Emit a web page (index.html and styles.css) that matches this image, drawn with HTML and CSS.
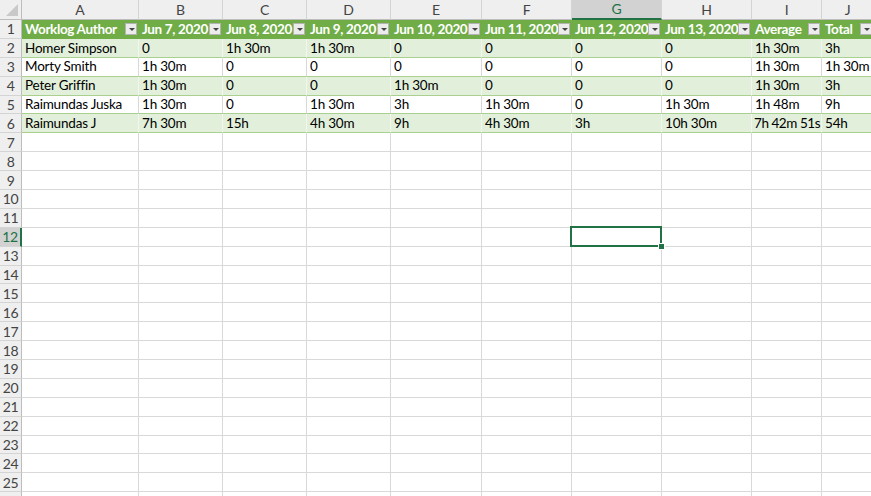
FILE: index.html
```html
<!DOCTYPE html>
<html>
<head>
<meta charset="utf-8">
<link rel="stylesheet" href="styles.css">
</head>
<body>
<div class="sheet">
  <div class="row colhead">
    <span class="corner"></span>
    <span>A</span><span>B</span><span>C</span><span>D</span><span>E</span><span>F</span><span class="sel">G</span><span>H</span><span>I</span><span>J</span>
  </div>
  <div class="row thead">
    <span class="rh">1</span>
    <span class="th">Worklog Author<i class="flt"></i></span>
    <span class="th">Jun 7, 2020<i class="flt"></i></span>
    <span class="th">Jun 8, 2020<i class="flt"></i></span>
    <span class="th">Jun 9, 2020<i class="flt"></i></span>
    <span class="th">Jun 10, 2020<i class="flt"></i></span>
    <span class="th">Jun 11, 2020<i class="flt"></i></span>
    <span class="th">Jun 12, 2020<i class="flt"></i></span>
    <span class="th">Jun 13, 2020<i class="flt"></i></span>
    <span class="th">Average<i class="flt"></i></span>
    <span class="th">Total<i class="flt"></i></span>
  </div>
  <div class="row band">
    <span class="rh">2</span><span>Homer Simpson</span><span>0</span><span>1h 30m</span><span>1h 30m</span><span>0</span><span>0</span><span>0</span><span>0</span><span>1h 30m</span><span>3h</span>
  </div>
  <div class="row plain">
    <span class="rh">3</span><span>Morty Smith</span><span>1h 30m</span><span>0</span><span>0</span><span>0</span><span>0</span><span>0</span><span>0</span><span>1h 30m</span><span>1h 30m</span>
  </div>
  <div class="row band">
    <span class="rh">4</span><span>Peter Griffin</span><span>1h 30m</span><span>0</span><span>0</span><span>1h 30m</span><span>0</span><span>0</span><span>0</span><span>1h 30m</span><span>3h</span>
  </div>
  <div class="row plain">
    <span class="rh">5</span><span>Raimundas Juska</span><span>1h 30m</span><span>0</span><span>1h 30m</span><span>3h</span><span>1h 30m</span><span>0</span><span>1h 30m</span><span>1h 48m</span><span>9h</span>
  </div>
  <div class="row band">
    <span class="rh">6</span><span>Raimundas J</span><span>7h 30m</span><span>15h</span><span>4h 30m</span><span>9h</span><span>4h 30m</span><span>3h</span><span>10h 30m</span><span class="tight">7h 42m 51s</span><span>54h</span>
  </div>
  <div class="row"><span class="rh">7</span><span></span><span></span><span></span><span></span><span></span><span></span><span></span><span></span><span></span><span></span></div>
  <div class="row"><span class="rh">8</span><span></span><span></span><span></span><span></span><span></span><span></span><span></span><span></span><span></span><span></span></div>
  <div class="row"><span class="rh">9</span><span></span><span></span><span></span><span></span><span></span><span></span><span></span><span></span><span></span><span></span></div>
  <div class="row"><span class="rh">10</span><span></span><span></span><span></span><span></span><span></span><span></span><span></span><span></span><span></span><span></span></div>
  <div class="row"><span class="rh">11</span><span></span><span></span><span></span><span></span><span></span><span></span><span></span><span></span><span></span><span></span></div>
  <div class="row"><span class="rh sel">12</span><span></span><span></span><span></span><span></span><span></span><span></span><span class="active"></span><span></span><span></span><span></span></div>
  <div class="row"><span class="rh">13</span><span></span><span></span><span></span><span></span><span></span><span></span><span></span><span></span><span></span><span></span></div>
  <div class="row"><span class="rh">14</span><span></span><span></span><span></span><span></span><span></span><span></span><span></span><span></span><span></span><span></span></div>
  <div class="row"><span class="rh">15</span><span></span><span></span><span></span><span></span><span></span><span></span><span></span><span></span><span></span><span></span></div>
  <div class="row"><span class="rh">16</span><span></span><span></span><span></span><span></span><span></span><span></span><span></span><span></span><span></span><span></span></div>
  <div class="row"><span class="rh">17</span><span></span><span></span><span></span><span></span><span></span><span></span><span></span><span></span><span></span><span></span></div>
  <div class="row"><span class="rh">18</span><span></span><span></span><span></span><span></span><span></span><span></span><span></span><span></span><span></span><span></span></div>
  <div class="row"><span class="rh">19</span><span></span><span></span><span></span><span></span><span></span><span></span><span></span><span></span><span></span><span></span></div>
  <div class="row"><span class="rh">20</span><span></span><span></span><span></span><span></span><span></span><span></span><span></span><span></span><span></span><span></span></div>
  <div class="row"><span class="rh">21</span><span></span><span></span><span></span><span></span><span></span><span></span><span></span><span></span><span></span><span></span></div>
  <div class="row"><span class="rh">22</span><span></span><span></span><span></span><span></span><span></span><span></span><span></span><span></span><span></span><span></span></div>
  <div class="row"><span class="rh">23</span><span></span><span></span><span></span><span></span><span></span><span></span><span></span><span></span><span></span><span></span></div>
  <div class="row"><span class="rh">24</span><span></span><span></span><span></span><span></span><span></span><span></span><span></span><span></span><span></span><span></span></div>
  <div class="row"><span class="rh">25</span><span></span><span></span><span></span><span></span><span></span><span></span><span></span><span></span><span></span><span></span></div>
  <div class="row last"><span class="rh"></span><span></span><span></span><span></span><span></span><span></span><span></span><span></span><span></span><span></span><span></span></div>
</div>
</body>
</html>
```

FILE: styles.css
```css
html, body {
  margin: 0;
  padding: 0;
  background: #ffffff;
  overflow: hidden;
}

body {
  font-family: Lato, "Liberation Sans", sans-serif;
  font-size: 13.5px;
  letter-spacing: -0.2px;
  color: #000;
}

.sheet {
  width: 871px;
  height: 496px;
  overflow: hidden;
}

.row {
  display: grid;
  grid-template-columns: 22px 117px 84px 84px 84px 91px 90px 90px 90px 70px 52px;
  height: 18.9px;
}

.row > span {
  box-sizing: border-box;
  border-right: 1px solid #d9d9d9;
  border-bottom: 1px solid #d9d9d9;
  padding: 1px 3px 0 3px;
  white-space: nowrap;
  overflow: hidden;
  display: flex;
  align-items: center;
  line-height: 1;
  position: relative;
}

.row > span.tight {
  padding-left: 2px;
  letter-spacing: -0.45px;
}

/* column header */
.row.colhead {
  height: 20px;
}
.colhead > span {
  background: #efefef;
  color: #444;
  justify-content: center;
  border-right-color: #d4d4d4;
  border-bottom-color: #bdbdbd;
  padding: 0;
  font-size: 14px;
}
.colhead > span.sel {
  background: #d2d2d2;
  color: #217346;
  border-bottom: 2px solid #217346;
}
.colhead > .corner {
  border-right-color: #bdbdbd;
}
.corner::after {
  content: "";
  position: absolute;
  right: 3px;
  bottom: 3px;
  width: 0;
  height: 0;
  border-left: 12px solid transparent;
  border-bottom: 12px solid #c9c9c9;
}

/* row header */
.row > .rh {
  background: #efefef;
  color: #444;
  justify-content: center;
  padding: 1px 0 0 0;
  border-right-color: #bdbdbd;
  border-bottom-color: #d4d4d4;
  overflow: visible;
  font-size: 14px;
  letter-spacing: -0.4px;
}
.row > .rh.sel {
  background: #d2d2d2;
  color: #217346;
  border-right: 2px solid #217346;
}

/* table header */
.thead > .th {
  background: #70ad47;
  color: #ffffff;
  font-weight: 700;
  letter-spacing: -0.35px;
  border-right-color: #70ad47;
  border-bottom-color: #70ad47;
  padding-left: 3px;
}
.flt {
  position: absolute;
  right: 1px;
  top: 3px;
  width: 12px;
  height: 12px;
  box-sizing: border-box;
  background: #ececec;
  border: 1px solid #b3b3b3;
}
.flt::after {
  content: "";
  position: absolute;
  left: 3px;
  top: 4px;
  border-left: 3px solid transparent;
  border-right: 3px solid transparent;
  border-top: 3px solid #444;
}

/* banded rows */
.band > span:not(.rh) {
  background: #e2efda;
  border-right-color: #f1f7ed;
  border-bottom-color: #a9d08e;
}
.plain > span:not(.rh) {
  background: #ffffff;
  border-right-color: #d9d9d9;
  border-bottom-color: #a9d08e;
}

/* active cell */
.row > .active {
  overflow: visible;
  z-index: 2;
}
.active::before {
  content: "";
  position: absolute;
  left: -2px;
  top: -2px;
  right: -1px;
  bottom: -1px;
  border: 2px solid #217346;
}
.active::after {
  content: "";
  position: absolute;
  right: -3px;
  bottom: -3px;
  width: 5px;
  height: 5px;
  background: #217346;
  box-shadow: 0 0 0 1px #ffffff;
}
```
